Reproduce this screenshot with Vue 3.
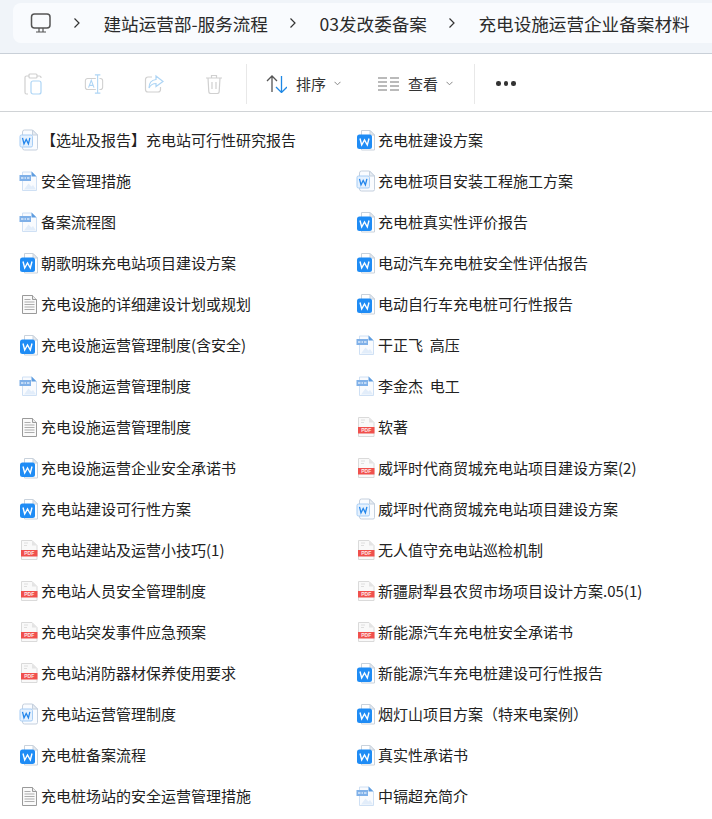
<script setup>
const left = [
  ['light', '【选址及报告】充电站可行性研究报告'], ['img', '安全管理措施'], ['img', '备案流程图'],
  ['word', '朝歌明珠充电站项目建设方案'], ['txt', '充电设施的详细建设计划或规划'], ['word', '充电设施运营管理制度(含安全)'],
  ['img', '充电设施运营管理制度'], ['txt', '充电设施运营管理制度'], ['word', '充电设施运营企业安全承诺书'],
  ['word', '充电站建设可行性方案'], ['pdf', '充电站建站及运营小技巧(1)'], ['pdf', '充电站人员安全管理制度'],
  ['pdf', '充电站突发事件应急预案'], ['pdf', '充电站消防器材保养使用要求'], ['light', '充电站运营管理制度'],
  ['word', '充电桩备案流程'], ['txt', '充电桩场站的安全运营管理措施']
]
const right = [
  ['word', '充电桩建设方案'], ['light', '充电桩项目安装工程施工方案'], ['word', '充电桩真实性评价报告'],
  ['word', '电动汽车充电桩安全性评估报告'], ['word', '电动自行车充电桩可行性报告'], ['img', '干正飞  高压'],
  ['img', '李金杰  电工'], ['pdf', '软著'], ['pdf', '威坪时代商贸城充电站项目建设方案(2)'],
  ['light', '威坪时代商贸城充电站项目建设方案'], ['pdf', '无人值守充电站巡检机制'], ['pdf', '新疆尉犁县农贸市场项目设计方案.05(1)'],
  ['pdf', '新能源汽车充电桩安全承诺书'], ['word', '新能源汽车充电桩建设可行性报告'], ['word', '烟灯山项目方案（特来电案例）'],
  ['word', '真实性承诺书'], ['img', '中镉超充简介']
]
const columns = [left, right]
const crumbs = ['建站运营部-服务流程', '03发改委备案', '充电设施运营企业备案材料']
</script>

<template>
  <div class="page">
    <header class="crumbbar">
      <nav class="crumbs">
        <svg class="pc" width="22" height="22" viewBox="0 0 22 22" fill="none" stroke="#555" stroke-width="1.5">
          <rect x="1.500" y="2" width="18.500" height="14" rx="3" />
          <path d="M6 20h10M9 16v4M13 16v4" stroke-width="1.200" />
        </svg>
        <template v-for="c in crumbs" :key="c">
          <svg class="chev" width="8" height="12" viewBox="0 0 8 12" fill="none" stroke="#333" stroke-width="1.200"><path d="M1.500 1.500 6 6l-4.500 4.500" /></svg>
          <span class="crumb">{{ c }}</span>
        </template>
      </nav>
    </header>

    <div class="toolbar">
      <div class="tools">
        <svg width="20" height="22" viewBox="0 0 20 22" fill="none" stroke-width="1.200">
          <path d="M6 3H3.500A1.500 1.500 0 0 0 2 4.500V19.500A1.500 1.500 0 0 0 3.500 21H5" stroke="#d0d0d0" />
          <path d="M14 3h2.500A1.500 1.500 0 0 1 18 4.500V5" stroke="#d0d0d0" />
          <rect x="6" y="1" width="8" height="4" rx="1" stroke="#d0d0d0" />
          <rect x="8" y="8" width="10" height="13" rx="2" stroke="#aed5f5" />
        </svg>
        <svg width="20" height="22" viewBox="0 0 22 22" fill="none" stroke-width="1.200">
          <path d="M13 5H4a2.500 2.500 0 0 0-2.500 2.500v7A2.500 2.500 0 0 0 4 17h9M17 5h1a2.500 2.500 0 0 1 2.500 2.500v7A2.500 2.500 0 0 1 18 17h-1" stroke="#d0d0d0" />
          <path d="M12 1h6M15 1v20M12 21h6" stroke="#aed5f5" />
          <path d="M5 15l3-8 3 8M6 12.500h4" stroke="#aed5f5" />
        </svg>
        <svg width="20" height="20" viewBox="0 0 20 20" fill="none" stroke-width="1.200">
          <path d="M8 3H4a2.500 2.500 0 0 0-2.500 2.500v10A2.500 2.500 0 0 0 4 18h10a2.500 2.500 0 0 0 2.500-2.500V13" stroke="#d0d0d0" />
          <path d="M12 2l7 5.500-7 5V9.500c-3.500 0-5.500 1.500-7 4.500 0-5 2.500-8 7-8.500z" stroke="#aed5f5" />
        </svg>
        <svg width="18" height="20" viewBox="0 0 18 20" fill="none" stroke="#d0d0d0" stroke-width="1.200">
          <path d="M1 4h16M6.500 4V1.500h5V4M3 4l.8 13.500A2 2 0 0 0 5.800 19.500h6.400a2 2 0 0 0 2-2L15 4M7 8v7M11 8v7" />
        </svg>
      </div>
      <span class="sep"></span>
      <button class="action sort">
        <svg width="21" height="18" viewBox="0 0 21 18" fill="none" stroke-width="1.300">
          <path d="M1 6l5-5 5 5M6 1v16" stroke="#555" />
          <path d="M10 12l5.500 5.500L21 12M15.500 17V1" stroke="#1e88e5" />
        </svg>
        <span>排序</span>
        <svg width="7" height="5" viewBox="0 0 7 5" fill="none" stroke="#888"><path d="M.5.8 3.500 3.800 6.500.8" /></svg>
      </button>
      <button class="action view">
        <svg width="21" height="14" viewBox="0 0 21 14" fill="none" stroke="#777" stroke-width="1.100">
          <path d="M0 1h9M0 5h9M0 9h9M0 13h9M12 1h9M12 5h9M12 9h9M12 13h9" />
        </svg>
        <span>查看</span>
        <svg width="7" height="5" viewBox="0 0 7 5" fill="none" stroke="#888"><path d="M.5.8 3.500 3.800 6.500.8" /></svg>
      </button>
      <span class="sep last"></span>
      <div class="more"><i></i><i></i><i></i></div>
    </div>

    <main class="files">
      <ul v-for="(col, i) in columns" :key="i" class="col" :class="i ? 'right' : 'left'">
        <li v-for="(f, j) in col" :key="j" class="file">
          <svg class="ficon" width="20" height="22" viewBox="0 0 20 22">
            <template v-if="f[0] === 'word'">
              <path d="M5.500 1.500h8.500l4.500 4.500v15H5.500z" fill="#fff" stroke="#c9d2dc" />
              <path d="M14 1.500V6h4.500z" fill="#e6ebf1" stroke="#c9d2dc" />
              <rect x="1" y="5.500" width="15" height="14.500" rx="2.500" fill="#1f8cf5" />
              <path d="M4 9.500l1.700 6.500 2.800-5 2.800 5L13 9.500" fill="none" stroke="#fff" stroke-width="1.400" />
            </template>
            <template v-else-if="f[0] === 'light'">
              <path d="M3.500 3A2 2 0 0 1 5.500 1h8L18.500 6v13.500a1.500 1.500 0 0 1-1.500 1.500H5.500a2 2 0 0 1-2-2z" fill="#fafcff" stroke="#c5d0de" />
              <path d="M13.500 1v5h5z" fill="#e8edf3" stroke="#c5d0de" />
              <rect x="1" y="6" width="12.500" height="12" rx="1.500" fill="#e5f1fe" stroke="#a6cdf5" />
              <path d="M3.500 8.800l1.500 6 2.200-4.300 2.200 4.300 1.500-6" fill="none" stroke="#2487ec" stroke-width="1.300" />
            </template>
            <template v-else-if="f[0] === 'img'">
              <path d="M3.500 2h9.500L17.500 6.500V20.500H3.500z" fill="#f9fbfe" stroke="#cfe0f4" />
              <path d="M12.500 1.500v5h5z" fill="#5f9de0" />
              <rect x="0.500" y="5" width="11.500" height="6" fill="#7fb0e8" />
              <path d="M2 8h2.500M5.500 8h1.500M8 8h2.500" stroke="#dbe9fa" stroke-width="1.500" />
              <path d="M5 19.500l4.500-6 3 3 1.500-1.500 3 4.500z" fill="#e2edfa" />
            </template>
            <template v-else-if="f[0] === 'txt'">
              <path d="M3.500 2.500h10l4 4v14h-14z" fill="#fafafa" stroke="#9a9a9a" />
              <path d="M13.500 2.500v4h4" fill="#ececec" stroke="#9a9a9a" />
              <path d="M5.500 6.500h6M5.500 9h10M5.500 11.500h10M5.500 14h10M5.500 16.500h10" stroke="#adadad" />
            </template>
            <template v-else>
              <path d="M2.500 1.500h10.500l5 5v14H2.500z" fill="#f9f9f9" stroke="#dadada" />
              <path d="M13 1.500v5h5z" fill="#e4e4e4" />
              <path d="M5 4h4M5 6.500h3" stroke="#dedede" />
              <rect x="2" y="11" width="16.500" height="6.500" fill="#f0504c" />
              <text x="10.250" y="16.400" text-anchor="middle" class="pdf">PDF</text>
            </template>
          </svg>
          <span class="name">{{ f[1] }}</span>
        </li>
      </ul>
    </main>
  </div>
</template>

<style>
html, body { margin: 0; background: #fff; }
</style>

<style scoped>
.page {
  width: 712px;
  height: 819px;
  overflow: hidden;
  background: #fff;
  font-family: "Noto Sans CJK SC", "Noto Sans", sans-serif;
  color: #222;
}
.crumbbar {
  box-sizing: border-box;
  height: 54px;
  padding: 3px 0 10px 13px;
  background: #f0f4f9;
  border-bottom: 1px solid #c9d0d8;
}
.crumbs {
  display: flex;
  align-items: center;
  height: 40px;
  padding-left: 17px;
  background: #f9fbfe;
  border-radius: 8px 0 0 8px;
  white-space: nowrap;
}
.pc { flex: none; }
.chev { flex: none; margin: 0 22.500px 0 21px; }
.crumb { font-size: 17.600px; color: #2a2a2a; }
.toolbar {
  box-sizing: border-box;
  display: flex;
  align-items: center;
  height: 58px;
  padding-top: 2px;
  border-bottom: 1px solid #d0d3d6;
}
.tools { display: flex; align-items: center; gap: 40.500px; padding-left: 23px; width: 246px; box-sizing: border-box; flex: none; }
.sep { width: 1px; height: 40px; background: #e8e8e8; flex: none; }
.sep.last { margin-left: 21px; }
.action {
  display: flex;
  align-items: center;
  border: 0;
  padding: 0;
  background: none;
  font: inherit;
  font-size: 15px;
  color: #333;
}
.sort { margin-left: 19px; }
.view { margin-left: 37px; }
.action span { margin: 0 8px 0 9px; }
.more { display: flex; gap: 3px; margin-left: 21px; }
.more i { width: 4.500px; height: 4.500px; border-radius: 50%; background: #333; }
.files { display: flex; padding-top: 7px; }
.col { list-style: none; margin: 0; padding: 0; }
.left { width: 356px; padding-left: 19px; box-sizing: border-box; }
.file { display: flex; align-items: center; height: 41px; }
.ficon { flex: none; margin-right: 2px; }
.name { font-size: 15px; white-space: pre; color: #222; }
.pdf { font: 700 5px "Liberation Sans", sans-serif; fill: #ffe9e8; }
</style>
